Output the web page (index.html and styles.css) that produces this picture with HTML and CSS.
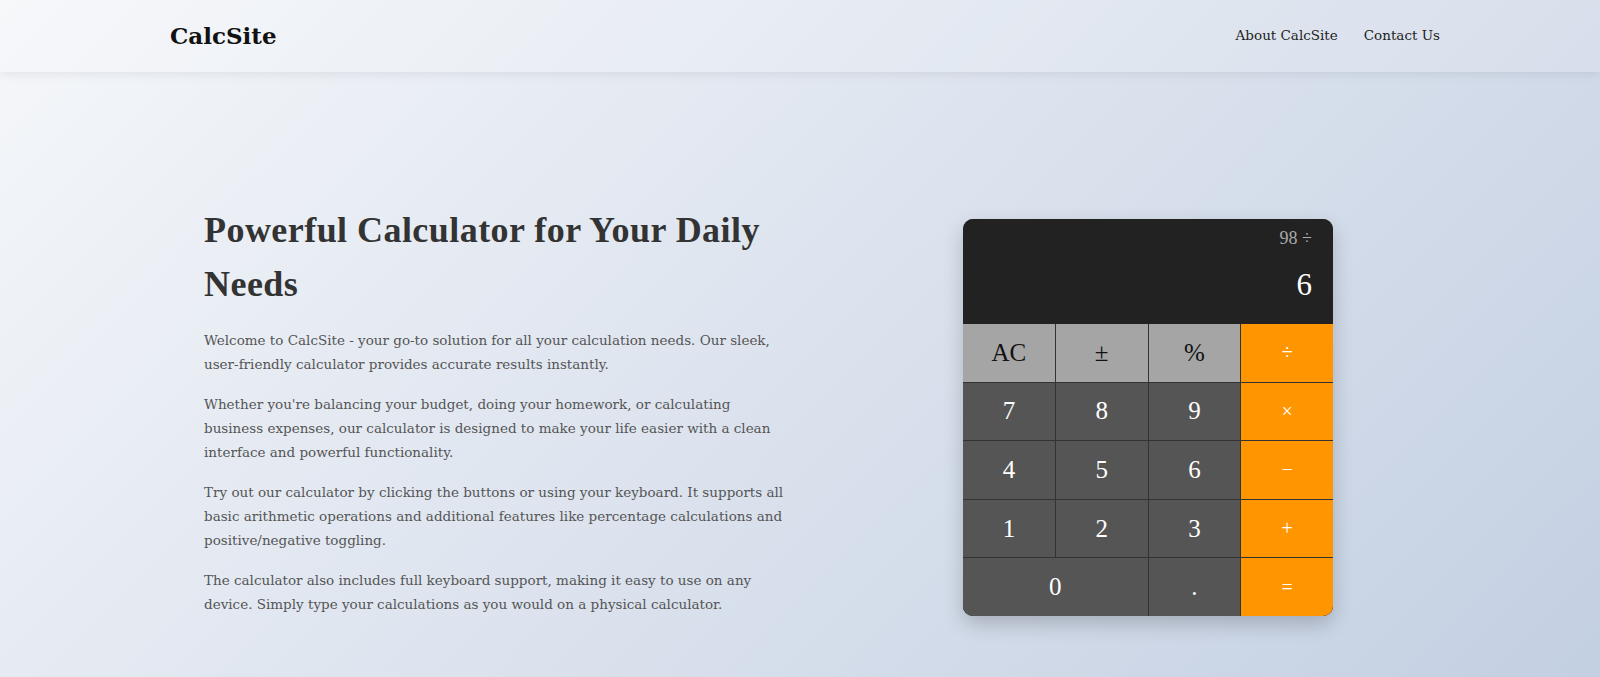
FILE: index.html
```html
<!DOCTYPE html>
<html lang="en">
<head>
<meta charset="utf-8">
<title>CalcSite</title>
<link rel="stylesheet" href="styles.css">
</head>
<body>
<header class="site-header">
  <div class="logo">CalcSite</div>
  <nav class="nav">
    <a href="#" class="nav-link">About CalcSite</a>
    <a href="#" class="nav-link">Contact Us</a>
  </nav>
</header>
<main class="hero">
  <section class="intro">
    <h1 class="title">Powerful Calculator for Your Daily Needs</h1>
    <p>Welcome to CalcSite - your go-to solution for all your calculation needs. Our sleek, user-friendly calculator provides accurate results instantly.</p>
    <p>Whether you're balancing your budget, doing your homework, or calculating business expenses, our calculator is designed to make your life easier with a clean interface and powerful functionality.</p>
    <p>Try out our calculator by clicking the buttons or using your keyboard. It supports all basic arithmetic operations and additional features like percentage calculations and positive/negative toggling.</p>
    <p>The calculator also includes full keyboard support, making it easy to use on any device. Simply type your calculations as you would on a physical calculator.</p>
  </section>
  <section class="calculator">
    <div class="display">
      <div class="previous">98 ÷</div>
      <div class="current">6</div>
    </div>
    <div class="keys">
      <button class="key fn">AC</button>
      <button class="key fn">±</button>
      <button class="key fn">%</button>
      <button class="key op">÷</button>
      <button class="key">7</button>
      <button class="key">8</button>
      <button class="key">9</button>
      <button class="key op">×</button>
      <button class="key">4</button>
      <button class="key">5</button>
      <button class="key">6</button>
      <button class="key op">−</button>
      <button class="key">1</button>
      <button class="key">2</button>
      <button class="key">3</button>
      <button class="key op">+</button>
      <button class="key wide">0</button>
      <button class="key">.</button>
      <button class="key op">=</button>
    </div>
  </section>
</main>
</body>
</html>
```

FILE: styles.css
```css
html, body {
  margin: 0;
  padding: 0;
}

body {
  min-height: 100vh;
  background: linear-gradient(135deg, #f5f7fa 0%, #c3cfe2 100%);
  font-family: "DejaVu Serif", "Liberation Serif", serif;
  color: #333;
}

.site-header {
  height: 72px;
  box-sizing: border-box;
  display: flex;
  align-items: center;
  justify-content: space-between;
  padding: 0 160px 0 170px;
  background: rgba(255, 255, 255, 0.15);
  box-shadow: 0 2px 10px rgba(0, 0, 0, 0.08);
}

.logo {
  font-family: "DejaVu Serif", serif;
  font-weight: bold;
  font-size: 23px;
  color: #111;
  margin-top: -2px;
}

.nav {
  display: flex;
  gap: 26px;
  margin-top: -3px;
}

.nav-link {
  font-family: "DejaVu Serif", serif;
  font-size: 13.5px;
  color: #222;
  text-decoration: none;
}

.hero {
  display: flex;
  align-items: center;
  padding: 131px 0 0 204px;
}

.intro {
  width: 586px;
}

.title {
  font-family: "Liberation Serif", serif;
  font-size: 36px;
  line-height: 54px;
  font-weight: bold;
  letter-spacing: 0.45px;
  color: #333;
  margin: 0 0 17px;
}

.intro p {
  font-family: "DejaVu Serif", serif;
  font-size: 13.5px;
  line-height: 24px;
  color: #555;
  margin: 0 0 16px;
}

.calculator {
  width: 370px;
  margin-left: 173px;
  border-radius: 10px;
  overflow: hidden;
  background: #333;
  box-shadow: 0 8px 20px rgba(0, 0, 0, 0.2);
}

.display {
  height: 105px;
  box-sizing: border-box;
  background: #222;
  padding: 9px 21px 23px;
  display: flex;
  flex-direction: column;
  justify-content: space-between;
  align-items: flex-end;
}

.previous {
  font-family: "Liberation Serif", serif;
  font-size: 18px;
  line-height: 20px;
  color: #aaa;
}

.current {
  font-family: "Liberation Serif", serif;
  font-size: 31px;
  line-height: 32px;
  color: #fff;
}

.keys {
  display: grid;
  grid-template-columns: repeat(4, 1fr);
  grid-template-rows: repeat(5, 1fr);
  height: 292px;
  gap: 1px;
  background: #333;
}

.key {
  border: none;
  padding: 0;
  margin: 0;
  background: #555;
  color: #fff;
  font-family: "Liberation Serif", serif;
  font-size: 25px;
}

.key.fn {
  background: #a5a5a5;
  color: #111;
}

.key.op {
  background: #ff9500;
  color: #fff;
  font-size: 20px;
}

.key.wide {
  grid-column: span 2;
}
```
